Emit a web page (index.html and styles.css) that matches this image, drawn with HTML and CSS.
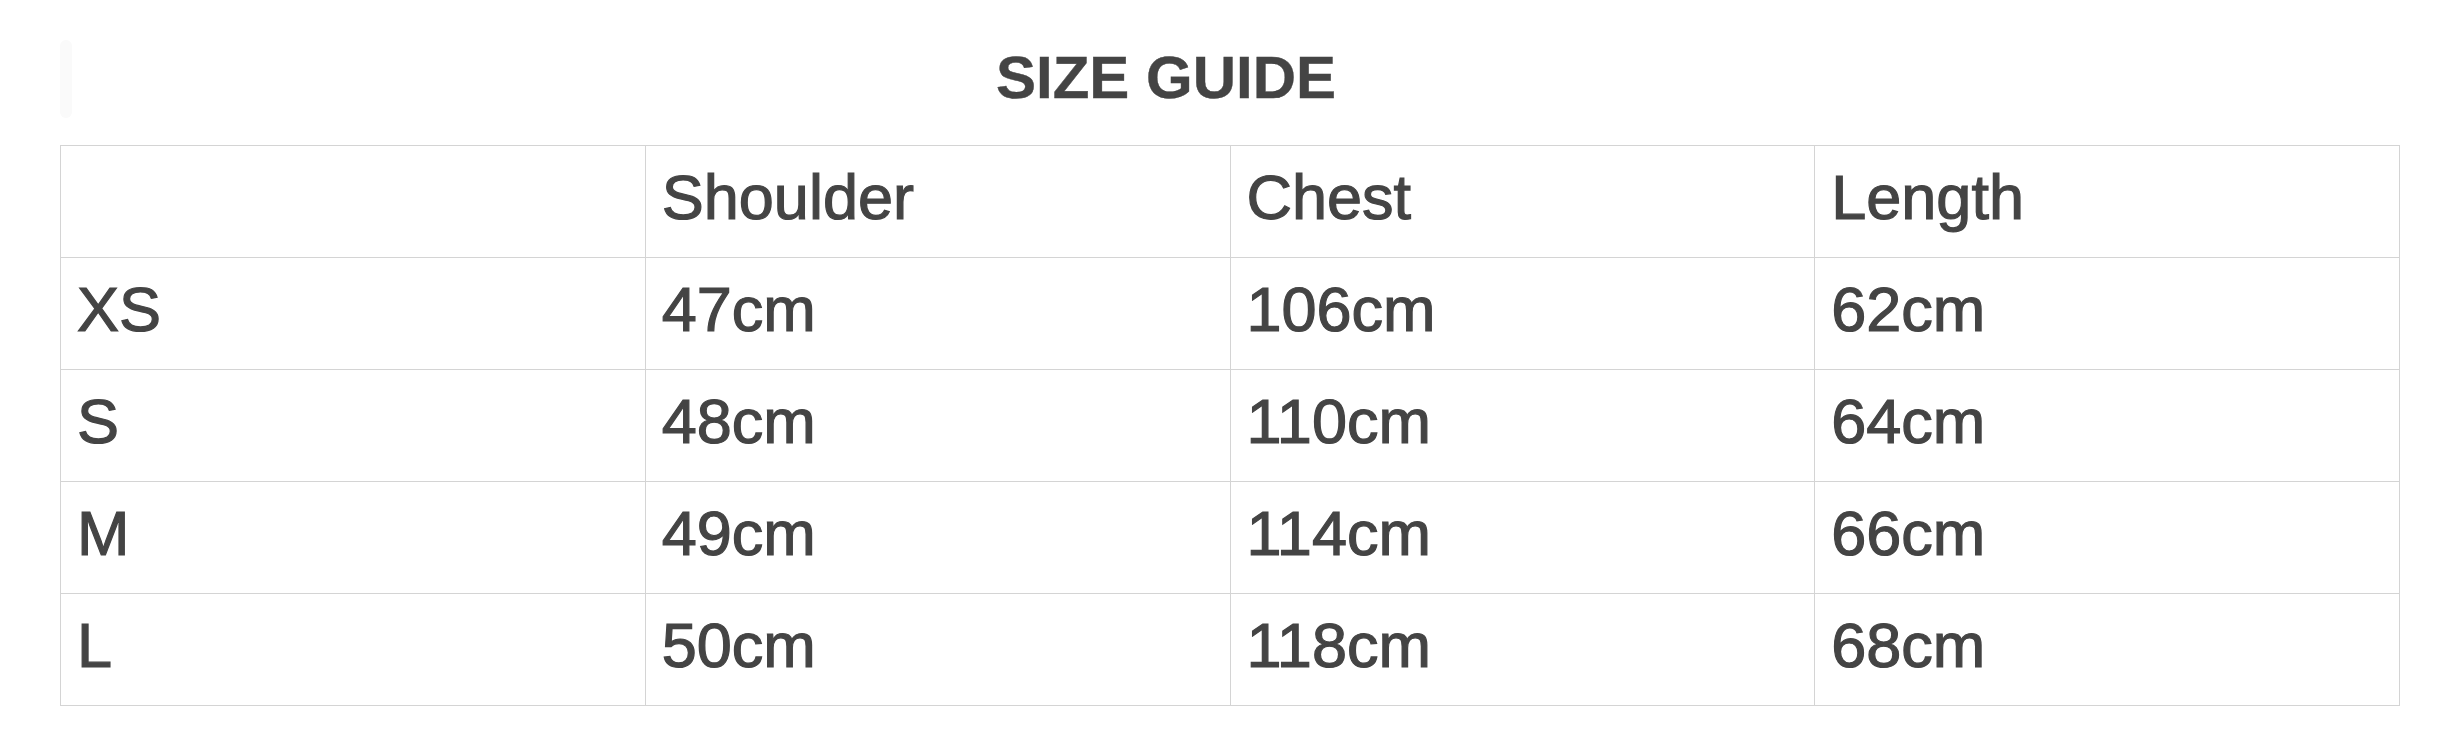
FILE: index.html
```html
<!DOCTYPE html>
<html lang="en">
<head>
<meta charset="utf-8">
<title>Size Guide</title>
<link rel="stylesheet" href="styles.css">
</head>
<body>
<div class="page">
  <header class="guide-header">
    <div class="ghost-bar"></div>
    <h1 class="guide-title">SIZE GUIDE</h1>
  </header>
  <table class="size-table">
    <colgroup><col><col><col><col></colgroup>
    <thead>
      <tr><th></th><th>Shoulder</th><th>Chest</th><th>Length</th></tr>
    </thead>
    <tbody>
      <tr><td>XS</td><td>47cm</td><td>106cm</td><td>62cm</td></tr>
      <tr><td>S</td><td>48cm</td><td>110cm</td><td>64cm</td></tr>
      <tr><td>M</td><td>49cm</td><td>114cm</td><td>66cm</td></tr>
      <tr><td>L</td><td>50cm</td><td>118cm</td><td>68cm</td></tr>
    </tbody>
  </table>
</div>
</body>
</html>
```
FILE: styles.css
```css
html, body {
  margin: 0;
  padding: 0;
  background: #ffffff;
}
body {
  font-family: "Liberation Sans", Arial, sans-serif;
  color: #444444;
}
.page {
  width: 2463px;
}
.guide-header {
  display: flex;
  align-items: flex-start;
  padding: 40px 0 0 60px;
}
.ghost-bar {
  width: 12px;
  height: 78px;
  border-radius: 6px;
  background: #fafafa;
  flex: none;
}
.guide-title {
  flex: 1;
  margin: 0;
  padding: 3px 203px 0 0;
  text-align: center;
  font-size: 60px;
  line-height: 70px;
  font-weight: 700;
  color: #444444;
  -webkit-text-stroke: 0.4px #444444;
}
.size-table {
  margin: 27px 0 0 60px;
  width: 2340px;
  table-layout: fixed;
  border-collapse: collapse;
  border: 1px solid #cccccc;
}
.size-table th,
.size-table td {
  border: 1px solid #d4d4d4;
  padding: 16px 16px 25px;
  font-size: 63px;
  line-height: 70px;
  font-weight: 400;
  text-align: left;
  color: #444444;
  -webkit-text-stroke: 1.2px #444444;
}
```
